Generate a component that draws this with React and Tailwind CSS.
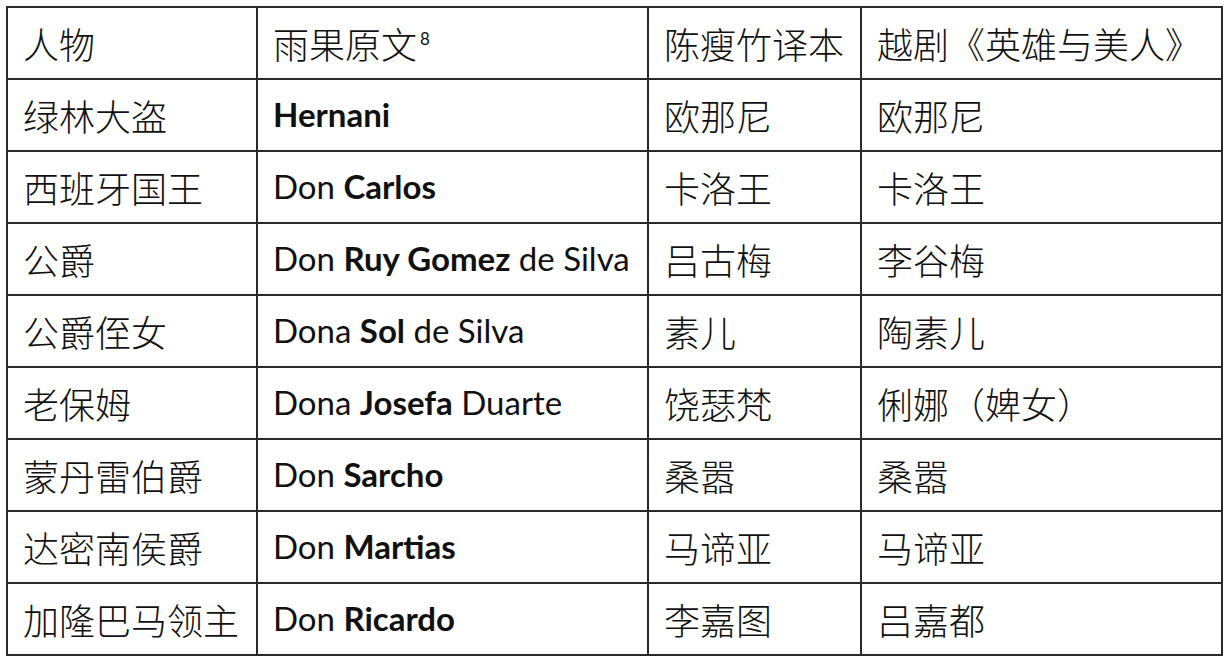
const rows = [
  ['绿林大盗', [['Hernani', true]], '欧那尼', '欧那尼'],
  ['西班牙国王', [['Don ', false], ['Carlos', true]], '卡洛王', '卡洛王'],
  ['公爵', [['Don ', false], ['Ruy Gomez', true], [' de Silva', false]], '吕古梅', '李谷梅'],
  ['公爵侄女', [['Dona ', false], ['Sol', true], [' de Silva', false]], '素儿', '陶素儿'],
  ['老保姆', [['Dona ', false], ['Josefa', true], [' Duarte', false]], '饶瑟梵', '俐娜（婢女）'],
  ['蒙丹雷伯爵', [['Don ', false], ['Sarcho', true]], '桑嚣', '桑嚣'],
  ['达密南侯爵', [['Don ', false], ['Martias', true]], '马谛亚', '马谛亚'],
  ['加隆巴马领主', [['Don ', false], ['Ricardo', true]], '李嘉图', '吕嘉都'],
];

const cjk = "font-['Noto_Sans_CJK_SC',sans-serif] text-[36px] font-light";
const latin = "font-['Lato','Noto_Sans_CJK_SC',sans-serif] text-[33px]";
const cell = 'border-2 border-[#2a2a2a] h-[72px] pl-[15px] align-middle whitespace-nowrap text-[#111]';

export default function App() {
  return (
    <div className="w-[1226px] h-[668px] bg-white pt-[6px] pl-[6px]">
      <table className="table-fixed border-collapse w-[1215px]">
        <colgroup>
          <col className="w-[250px]" />
          <col className="w-[391px]" />
          <col className="w-[213px]" />
          <col className="w-[361px]" />
        </colgroup>
        <tbody>
          <tr>
            <td className={`${cell} ${cjk}`}>人物</td>
            <td className={`${cell} ${cjk}`}>
              雨果原文<span className="font-['Lato',sans-serif] text-[17px] font-normal relative -top-[14px] ml-[3px]">8</span>
            </td>
            <td className={`${cell} ${cjk}`}>陈瘦竹译本</td>
            <td className={`${cell} ${cjk}`}>越剧《英雄与美人》</td>
          </tr>
          {rows.map((r, i) => (
            <tr key={i}>
              <td className={`${cell} ${cjk}`}>{r[0]}</td>
              <td className={`${cell} ${latin}`}>
                {r[1].map(([t, b], j) => (
                  <span key={j} className={b ? 'font-bold' : 'font-normal'}>{t.replace(/ /g, '\u00a0')}</span>
                ))}
              </td>
              <td className={`${cell} ${cjk}`}>{r[2]}</td>
              <td className={`${cell} ${cjk}`}>{r[3]}</td>
            </tr>
          ))}
        </tbody>
      </table>
    </div>
  );
}
